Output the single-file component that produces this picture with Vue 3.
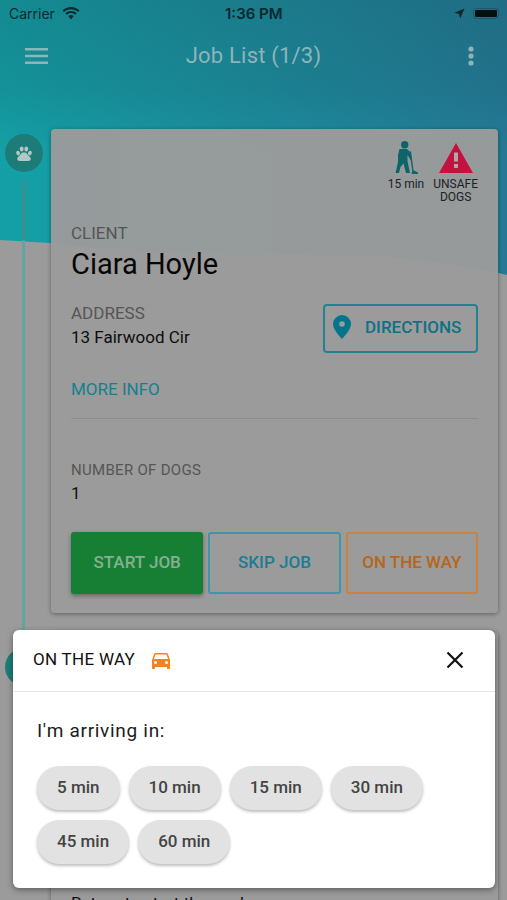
<template>
  <div class="screen">
    <div class="backdrop">
      <svg class="wave" viewBox="0 0 507 290" preserveAspectRatio="none">
        <defs>
          <linearGradient id="teal" x1="0" y1="0" x2="1" y2="0">
            <stop offset="0" stop-color="#14a0a6" />
            <stop offset="1" stop-color="#247a96" />
          </linearGradient>
        </defs>
        <path d="M0 0H507V275C470 266 420 258 370 256C280 254 130 254 50 243L0 240Z" fill="url(#teal)" />
      </svg>
    </div>

    <div class="status-bar">
      <div class="status-left">
        <span>Carrier</span>
        <svg class="wifi" viewBox="0 0 18 13">
          <path d="M9 2.200c2.700 0 5.100 1 7 2.800l1.400-1.600C15.200 1.300 12.200 0 9 0S2.800 1.300.6 3.400L2 5c1.900-1.800 4.300-2.800 7-2.800z" />
          <path d="M9 6.100c1.600 0 3 .6 4.200 1.700l1.400-1.600C13.100 4.800 11.100 4 9 4s-4.100.8-5.600 2.200l1.400 1.600C6 6.700 7.400 6.100 9 6.100z" />
          <path d="M9 8c-1 0-1.900.4-2.600 1L9 12.600 11.600 9C10.900 8.400 10 8 9 8z" />
        </svg>
      </div>
      <span class="clock">1:36 PM</span>
      <div class="status-right">
        <svg class="arrow" viewBox="0 0 12 12"><path d="M11.500.5L.5 5.300l5 1.200 1.200 5z" /></svg>
        <div class="battery"><i></i></div>
      </div>
    </div>

    <header class="toolbar">
      <svg class="menu" viewBox="0 0 23 16"><path d="M0 0h23v2.600H0zM0 6.700h23v2.600H0zM0 13.400h23V16H0z" /></svg>
      <div class="toolbar-title">Job List (1/3)</div>
      <svg class="more" viewBox="0 0 6 20"><circle cx="3" cy="3" r="2.600" /><circle cx="3" cy="10" r="2.600" /><circle cx="3" cy="17" r="2.600" /></svg>
    </header>

    <main class="timeline">
      <div class="item">
        <div class="rail">
          <div class="dot">
            <svg viewBox="0 0 24 24"><path d="M4.800 9.500c1.100-.3 2.300.6 2.700 2s-.1 2.800-1.200 3.100-2.300-.6-2.700-2 .1-2.800 1.200-3.100zM9.500 4.800c1.200 0 2.100 1.300 2.100 2.800S10.700 10.400 9.500 10.400 7.400 9.100 7.400 7.600 8.300 4.800 9.500 4.800zM14.500 4.800c1.200 0 2.100 1.300 2.100 2.800s-.9 2.800-2.100 2.800-2.100-1.300-2.100-2.800.9-2.800 2.100-2.800zM19.200 9.500c1.100.3 1.600 1.700 1.200 3.100s-1.600 2.300-2.700 2-1.600-1.700-1.200-3.100 1.600-2.300 2.700-2zM12 11.200c-2 0-3.300 1.500-4.300 3-1 1.400-3.100 2.300-3.100 4.200 0 1.600 1.300 2.400 2.800 2.400h9.200c1.500 0 2.800-.8 2.800-2.400 0-1.900-2.100-2.800-3.100-4.200-1-1.500-2.300-3-4.300-3z" /></svg>
          </div>
          <div class="line"></div>
        </div>

        <section class="card">
          <div class="badges">
            <div class="badge walk">
              <svg viewBox="0 0 24 34">
                <circle cx="10.700" cy="3.700" r="3.700" />
                <path d="M5.500 8H12c1.500 0 2.500 1 3 2l3 7-1.500 2-3-5v6l2.500 12h-4l-2.500-9.500-3 3.500-1.500 6h-3.500l2.500-11V14z" />
                <path d="M15.300 10.500l1.700-.3 2.500 19 4.500 2.300V33h-6.200v-1.500l.5-1.500z" />
              </svg>
              <span>15 min</span>
            </div>
            <div class="badge warn">
              <svg viewBox="0 0 34 30">
                <path d="M17 0l17 30H0z" fill="#c4123f" />
                <path d="M15 9.500h4v9h-4zM15 21h4v4h-4z" fill="#a9a9a9" />
              </svg>
              <span>UNSAFE<br />DOGS</span>
            </div>
          </div>

          <div class="label client-label">CLIENT</div>
          <div class="client-name">Ciara Hoyle</div>

          <div class="address-row">
            <div class="address-block">
              <div class="label">ADDRESS</div>
              <div class="address">13 Fairwood Cir</div>
            </div>
            <button class="btn-directions" type="button">
              <svg viewBox="0 0 18 24"><path fill-rule="evenodd" d="M9 0a9 9 0 0 0-9 9c0 6 9 15 9 15s9-9 9-15a9 9 0 0 0-9-9zm0 6.200a2.800 2.800 0 1 1 0 5.600 2.800 2.800 0 0 1 0-5.600z" /></svg>
              DIRECTIONS
            </button>
          </div>

          <a class="more-info">MORE INFO</a>
          <div class="divider"></div>

          <div class="label small">NUMBER OF DOGS</div>
          <div class="dogs">1</div>

          <div class="actions">
            <button class="btn start" type="button">START JOB</button>
            <button class="btn skip" type="button">SKIP JOB</button>
            <button class="btn way" type="button">ON THE WAY</button>
          </div>
        </section>
      </div>

      <div class="item next">
        <div class="rail">
          <div class="dot"></div>
        </div>
        <section class="card card-next">
          <div class="next-text">Return to start the work</div>
        </section>
      </div>
    </main>

    <div class="modal">
      <div class="modal-head">
        <span class="modal-title">ON THE WAY</span>
        <svg class="car" viewBox="0 0 18 16"><path fill-rule="evenodd" d="M15.900.9C15.700.4 15.100 0 14.500 0h-11c-.6 0-1.200.4-1.400.9L0 7v8c0 .6.400 1 1 1h1c.6 0 1-.4 1-1v-1h12v1c0 .6.400 1 1 1h1c.6 0 1-.4 1-1V7zM3.500 11a1.500 1.500 0 1 1 0-3 1.500 1.500 0 0 1 0 3zm11 0a1.500 1.500 0 1 1 0-3 1.500 1.500 0 0 1 0 3zM2 6l1.500-4.500h11L16 6z" /></svg>
        <svg class="close" viewBox="0 0 18 18"><path d="M1.500 1.500l15 15M16.500 1.500l-15 15" /></svg>
      </div>
      <div class="modal-body">
        <div class="arriving">I'm arriving in:</div>
        <div class="chips">
          <button v-for="m in minutes" :key="m" class="chip" type="button">{{ m }} min</button>
        </div>
      </div>
    </div>
  </div>
</template>

<script setup>
const minutes = [5, 10, 15, 30, 45, 60];
</script>

<style>
html, body { margin: 0; background: #9a9a9a; }
</style>

<style scoped>
.screen {
  position: relative;
  width: 507px;
  height: 900px;
  overflow: hidden;
  background: #9b9b9b;
  font-family: Roboto, "Liberation Sans", sans-serif;
  color: #111;
}

.backdrop {
  position: absolute;
  inset: 0 0 auto 0;
  height: 290px;
}

.wave {
  display: block;
  width: 100%;
  height: 100%;
}

.backdrop::after {
  content: "";
  position: absolute;
  inset: 0 0 auto 0;
  height: 150px;
  background: linear-gradient(180deg, rgba(20, 60, 70, 0.22), rgba(20, 60, 70, 0.14) 60%, rgba(20, 60, 70, 0));
}

.status-bar {
  position: relative;
  height: 28px;
  box-sizing: border-box;
  padding: 0 8px 2px 9px;
  display: flex;
  align-items: center;
  justify-content: space-between;
  font-family: Inter, "Liberation Sans", sans-serif;
  font-size: 14px;
  color: #07292f;
}

.status-left {
  display: flex;
  align-items: center;
  gap: 7px;
}

.wifi {
  width: 18px;
  height: 13px;
  fill: #07292f;
}

.clock {
  position: absolute;
  left: 225px;
  font-weight: 600;
  font-size: 15px;
}

.status-right {
  display: flex;
  align-items: center;
  gap: 8px;
}

.arrow {
  width: 11px;
  height: 11px;
  fill: #07292f;
}

.battery {
  width: 26px;
  height: 11px;
  padding: 1px;
  box-sizing: border-box;
  border: 1px solid #1a5b68;
  border-radius: 3px;
}

.battery i {
  display: block;
  height: 100%;
  border-radius: 1px;
  background: #050f12;
}

.toolbar {
  position: relative;
  height: 55px;
  display: flex;
  align-items: center;
  justify-content: space-between;
  padding: 0 33px 0 25px;
}

.toolbar-title {
  position: absolute;
  left: 0;
  right: 0;
  text-align: center;
  font-size: 22px;
  color: #8db5b9;
  letter-spacing: 0.2px;
}

.menu {
  width: 23px;
  height: 16px;
  fill: #8db5b9;
}

.more {
  width: 6px;
  height: 20px;
  fill: #8db5b9;
}

.timeline {
  position: relative;
  display: flex;
  flex-direction: column;
  gap: 19px;
  padding: 46px 0 0 5px;
}

.item {
  display: flex;
}

.rail {
  width: 46px;
  flex: none;
  display: flex;
  flex-direction: column;
}

.dot {
  width: 38px;
  height: 38px;
  flex: none;
  margin-top: 5px;
  border-radius: 50%;
  background: #1d7c78;
  display: flex;
  align-items: center;
  justify-content: center;
}

.next .dot {
  margin-top: 16px;
}

.dot svg {
  width: 22px;
  height: 22px;
  fill: #b2c8c6;
}

.line {
  width: 3px;
  flex: 1;
  margin: 8px 0 -35px 17px;
  background: linear-gradient(180deg, #3f8e8e 0, #3f8e8e 60px, #62a79f 61px);
}

.card {
  width: 447px;
  height: 484px;
  box-sizing: border-box;
  padding: 12px 20px 0;
  border-radius: 4px;
  background: rgba(155, 155, 155, 0.96);
  box-shadow: 0 1px 4px rgba(0, 0, 0, 0.4);
}

.badges {
  display: flex;
  justify-content: flex-end;
  gap: 9px;
  height: 70px;
}

.badge {
  display: flex;
  flex-direction: column;
  align-items: center;
  font-size: 12px;
  line-height: 13px;
  text-align: center;
  color: #1b2224;
}

.walk svg {
  width: 24px;
  height: 34px;
  fill: #0d6569;
  margin-bottom: 3px;
}

.warn svg {
  width: 34px;
  height: 30px;
  margin: 2px 0 5px;
}

.label {
  font-size: 17px;
  line-height: 20px;
  color: #555;
}

.client-label {
  margin-top: 12px;
}

.client-name {
  font-size: 29px;
  line-height: 36px;
  color: #060606;
  margin-top: 3px;
}

.address-row {
  display: flex;
  justify-content: space-between;
  align-items: flex-start;
  margin-top: 22px;
}

.address-block {
  margin-top: -1px;
}

.address {
  font-size: 17px;
  line-height: 22px;
  color: #0d0d0d;
  margin-top: 3px;
}

.btn-directions {
  display: flex;
  align-items: center;
  gap: 14px;
  width: 155px;
  height: 49px;
  padding: 0 0 3px 8px;
  background: transparent;
  border: 2px solid #26808f;
  border-radius: 4px;
  font: 500 17px Roboto, sans-serif;
  color: #0f7186;
}

.btn-directions svg {
  width: 18px;
  height: 24px;
  fill: #04758c;
}

.more-info {
  display: block;
  margin-top: 26px;
  font-size: 17px;
  line-height: 20px;
  color: #14808e;
}

.divider {
  height: 1px;
  margin-top: 19px;
  background: #8c8c8c;
}

.small {
  font-size: 15px;
  margin-top: 41px;
  letter-spacing: 0.3px;
}

.dogs {
  font-size: 17px;
  line-height: 22px;
  margin-top: 2px;
}

.actions {
  display: grid;
  grid-template-columns: repeat(3, 1fr);
  gap: 5px;
  margin-top: 28px;
}

.btn {
  height: 62px;
  padding: 0 0 3px;
  border-radius: 3px;
  background: transparent;
  font: 500 17px Roboto, sans-serif;
}

.start {
  border: 0;
  background: #177f33;
  color: #86b091;
  box-shadow: 0 2px 4px rgba(0, 0, 0, 0.35);
}

.skip {
  border: 2px solid #3e96a8;
  color: #1a7d92;
}

.way {
  border: 2px solid #c9833f;
  color: #b76518;
}

.card-next {
  padding-top: 261px;
}

.next-text {
  font-size: 17px;
  line-height: 20px;
  color: #111;
}

.modal {
  position: absolute;
  left: 13px;
  top: 630px;
  width: 482px;
  height: 258px;
  border-radius: 6px;
  background: #fff;
  box-shadow: 0 2px 6px rgba(0, 0, 0, 0.4);
}

.modal-head {
  position: relative;
  height: 61px;
  display: flex;
  align-items: center;
  padding: 0 20px;
  border-bottom: 1px solid #e6e6e6;
}

.modal-title {
  font-size: 17px;
  color: #111;
  letter-spacing: 0.3px;
  margin-bottom: 3px;
}

.car {
  width: 18px;
  height: 16px;
  margin-left: 17px;
  fill: #f58220;
}

.close {
  position: absolute;
  right: 31px;
  top: 21px;
  width: 18px;
  height: 18px;
  fill: none;
  stroke: #111;
  stroke-width: 2.200;
}

.modal-body {
  padding: 27px 24px 0;
}

.arriving {
  font-size: 19px;
  line-height: 24px;
  color: #1c1c1c;
  letter-spacing: 0.7px;
}

.chips {
  display: flex;
  flex-wrap: wrap;
  gap: 10px 9px;
  margin-top: 23px;
  width: 420px;
}

.chip {
  height: 44px;
  padding: 0 20px 3px;
  border: 0;
  border-radius: 22px;
  background: #e2e2e2;
  font: 500 17px Roboto, sans-serif;
  color: #444;
  box-shadow: 0 2px 3px rgba(0, 0, 0, 0.25);
}
</style>
